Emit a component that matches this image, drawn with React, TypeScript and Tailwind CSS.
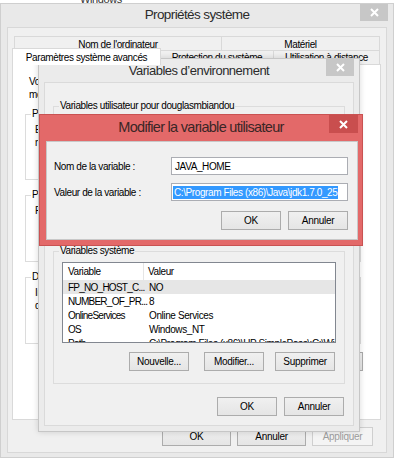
import type { ReactNode } from 'react';
import clsx from 'clsx';

function CloseBtn({ className }: { className: string }) {
  return (
    <div className={clsx('absolute top-0 flex items-center justify-center', className)}>
      <svg width="9" height="9" viewBox="0 0 9 9">
        <path d="M1 1L8 8M8 1L1 8" stroke="#fff" strokeWidth="2" />
      </svg>
    </div>
  );
}

function Btn({
  children,
  className,
  disabled
}: {
  children: ReactNode;
  className?: string;
  disabled?: boolean;
}) {
  return (
    <div
      className={clsx(
        'h-[19px] w-[60px] border flex items-center justify-center text-[10px] tracking-[-0.3px]',
        disabled
          ? 'border-[#cfcfcf] bg-[#f4f4f4] text-[#9d9d9d]'
          : 'border-[#acacac] bg-linear-to-b from-[#f0f0f0] to-[#e5e5e5] text-black',
        className
      )}
    >
      {children}
    </div>
  );
}

function Group({
  label,
  className,
  children,
  bg = 'bg-white'
}: {
  label: string;
  className?: string;
  children?: ReactNode;
  bg?: string;
}) {
  return (
    <div className={clsx('border border-[#dcdcdc]', className)}>
      <div className={clsx('-mt-[7px] ml-[5px] px-[1px] w-fit leading-[12px]', bg)}>{label}</div>
      {children}
    </div>
  );
}

const rows = [
  ['FP_NO_HOST_C...', 'NO'],
  ['NUMBER_OF_PR...', '8'],
  ['OnlineServices', 'Online Services'],
  ['OS', 'Windows_NT'],
  ['Path', 'C:\\Program Files (x86)\\HP SimplePass\\;C:\\Windows']
];

export default function App() {
  return (
    <div className="relative w-[394px] h-[458px] overflow-hidden bg-white text-black text-[10px] tracking-[-0.4px] font-['Liberation_Sans',Arial,sans-serif]">
      <div className="absolute left-[80px] -top-[9px] text-[11px] text-[#333]">Windows</div>

      {/* Propriétés système */}
      <div className="absolute left-0 top-[3px] w-[394px] h-[455px] bg-[#e9e9e9] border border-[#cfcfcf] flex flex-col">
        <div className="relative h-[23px] flex items-center justify-center text-[13.5px] tracking-[-0.6px] text-[#2b2b2b]">
          Propriétés système
          <CloseBtn className="right-[5px] -top-px w-[28px] h-[17px] bg-[#c7c7c7]" />
        </div>
        <div className="flex-1 mx-[6px] mb-[4px] bg-[#f0f0f0] border border-[#d8d8d8] pt-[8px] pl-[4px] pr-[5px] flex flex-col">
          <div className="flex ml-[2px] mr-[1px] h-[15px]">
            <div className="w-[208px] border border-b-0 border-[#d9d9d9] flex items-center justify-center">
              Nom de l'ordinateur
            </div>
            <div className="flex-1 border border-l-0 border-b-0 border-[#d9d9d9] flex items-center justify-center">
              Matériel
            </div>
          </div>
          <div className="flex h-[13px] items-end">
            <div className="relative z-10 w-[149px] h-[17px] -mb-px bg-white border border-b-0 border-[#d9d9d9] flex items-center justify-center">
              Paramètres système avancés
            </div>
            <div className="w-[113px] h-[14px] border-t border-r border-[#d9d9d9] flex items-center justify-center">
              Protection du système
            </div>
            <div className="w-[106px] h-[14px] border-t border-r border-[#d9d9d9] flex items-center justify-center">
              Utilisation à distance
            </div>
          </div>
          <div className="h-[356px] bg-white border border-[#d9d9d9] pt-[10px] pl-[12px] pr-[17px] flex flex-col">
            <div className="ml-[4px] leading-[13px]">
              Vous devez ouvrir une session d'administrateur pour effectuer la
              <br />
              modifications.
            </div>
            <Group label="Performances" className="mt-[13px] h-[66px] mr-[2px]">
              <div className="ml-[9px] mt-[3px] leading-[13px]">
                Effets visuels, planification du processeur,
                <br />
                mémoire virtuelle
              </div>
            </Group>
            <Group label="Profil des utilisateurs" className="mt-[15px] h-[67px] mr-[2px]">
              <div className="ml-[9px] mt-[3px] leading-[13px]">Paramètres du Bureau liés à votre connexion</div>
            </Group>
            <Group label="Démarrage et récupération" className="mt-[15px] h-[67px] mr-[2px]">
              <div className="ml-[9px] mt-[3px] leading-[13px]">
                Informations de démarrage du système,
                <br />
                de débogage
              </div>
            </Group>
            <div className="flex justify-end mt-[8px]">
              <Btn className="w-[150px]">Variables d'environnement...</Btn>
            </div>
          </div>
          <div className="flex justify-end gap-[6px] mt-[7px] mr-[8px]">
            <Btn className="w-[69px]">OK</Btn>
            <Btn className="w-[69px]">Annuler</Btn>
            <Btn className="w-[61px]" disabled>
              Appliquer
            </Btn>
          </div>
        </div>
      </div>

      {/* Variables d'environnement */}
      <div className="absolute left-[38px] top-[58px] w-[322px] h-[374px] bg-[#ebebeb] border border-[#c6c6c6] shadow-[0_0_6px_rgba(0,0,0,0.15)] flex flex-col">
        <div className="relative h-[23px] flex items-center justify-center text-[13px] tracking-[-0.5px] text-[#2b2b2b]">
          Variables d’environnement
          <CloseBtn className="right-[5px] -top-px w-[28px] h-[17px] bg-[#c7c7c7]" />
        </div>
        <div className="flex-1 mx-[5px] mb-[5px] bg-[#f0f0f0] border border-[#dadada] flex flex-col">
          <Group label="Variables utilisateur pour douglasmbiandou" bg="bg-[#f0f0f0]" className="mt-[23px] mx-[8px] h-[136px]" />
          <Group label="Variables système" bg="bg-[#f0f0f0]" className="mt-[9px] mx-[8px] h-[133px] flex flex-col">
            <div className="mt-[5px] mx-[8px] h-[81px] border border-[#828790] bg-white flex overflow-hidden">
              <div className="flex-1 flex flex-col">
                <div className="h-[17px] shrink-0 flex items-center">
                  <div className="w-[81px] h-full pl-[5px] flex items-center border-r border-[#e5e5e5]">Variable</div>
                  <div className="pl-[4px]">Valeur</div>
                </div>
                {rows.map(([k, v], i) => (
                  <div
                    key={k}
                    className={clsx('h-[14px] shrink-0 flex items-center', i === 0 && 'bg-[#e6e6e6]')}
                  >
                    <div className="w-[81px] pl-[5px] whitespace-nowrap tracking-[-0.75px]">{k}</div>
                    <div className="pl-[5px] whitespace-nowrap">{v}</div>
                  </div>
                ))}
              </div>
              <div className="w-[15px] shrink-0 bg-[#f0f0f0] flex flex-col items-center">
                <svg width="15" height="16" viewBox="0 0 15 16">
                  <path d="M4 10L7.5 6.5L11 10" stroke="#606060" strokeWidth="1.3" fill="none" />
                </svg>
                <div className="w-[13px] h-[15px] bg-[#cdcdcd]" />
                <div className="flex-1" />
                <svg width="15" height="16" viewBox="0 0 15 16">
                  <path d="M4 6L7.5 9.5L11 6" stroke="#606060" strokeWidth="1.3" fill="none" />
                </svg>
              </div>
            </div>
            <div className="flex justify-end mt-[9px] mr-[9px] gap-[11px]">
              <Btn className="mr-[4px]">Nouvelle...</Btn>
              <Btn>Modifier...</Btn>
              <Btn>Supprimer</Btn>
            </div>
          </Group>
          <div className="flex justify-end gap-[7px] mt-[13px] mr-[9px]">
            <Btn>OK</Btn>
            <Btn>Annuler</Btn>
          </div>
        </div>
      </div>

      {/* Modifier la variable utilisateur */}
      <div className="absolute left-[39px] top-[114px] w-[324px] h-[132px] bg-[#e36969] border border-[#c95252] flex flex-col">
        <div className="relative h-[26px] flex items-center justify-center text-[14.5px] tracking-[-0.7px] text-[#3a2626]">
          Modifier la variable utilisateur
          <CloseBtn className="right-[4px] w-[29px] h-[18px] bg-[#c94e4e]" />
        </div>
        <div className="flex-1 ml-[6px] mr-[4px] mb-[5px] bg-[#f0f0f0] border border-[#c8c8c8] pl-[7px] pr-[9px] pt-[15px] flex flex-col">
          <div className="flex items-center h-[18px]">
            <div className="w-[117px]">Nom de la variable :</div>
            <div className="flex-1 h-full border border-[#abadb3] bg-white flex items-center pl-[3px]">JAVA_HOME</div>
          </div>
          <div className="flex items-center h-[18px] mt-[8px]">
            <div className="w-[117px]">Valeur de la variable :</div>
            <div className="flex-1 h-full border border-[#abadb3] bg-white flex items-center pl-[1px]">
              <span className="bg-[#3399ff] text-white px-[1px] leading-[13px] whitespace-nowrap">
                C:\Program Files (x86)\Java\jdk1.7.0_25
              </span>
            </div>
          </div>
          <div className="flex justify-end gap-[7px] mt-[10px]">
            <Btn>OK</Btn>
            <Btn>Annuler</Btn>
          </div>
        </div>
      </div>
    </div>
  );
}
